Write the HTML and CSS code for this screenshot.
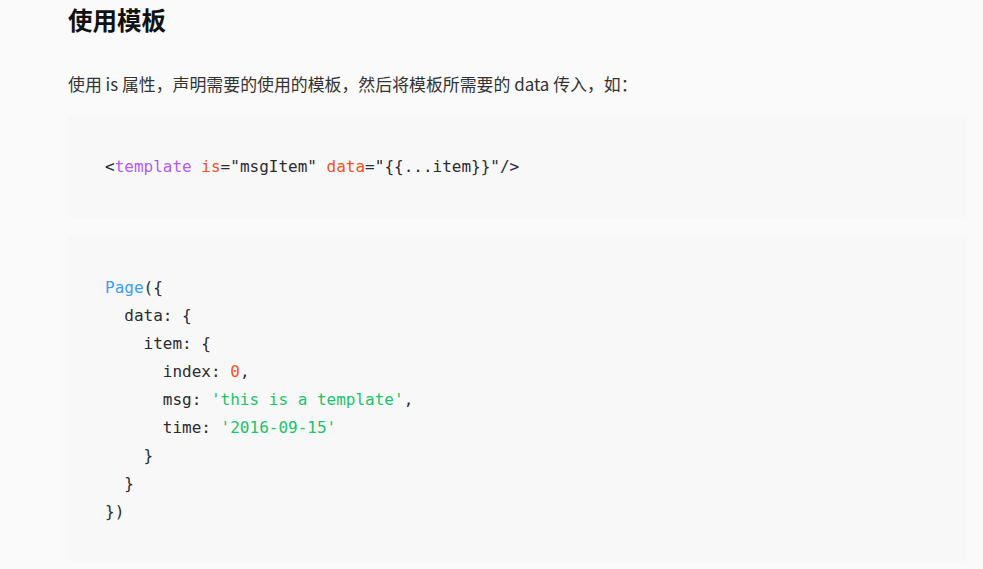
FILE: index.html
```
<!DOCTYPE html>
<html lang="zh-CN">
<head>
<meta charset="utf-8">
<title>使用模板</title>
<link rel="stylesheet" href="styles.css">
</head>
<body>
<main class="doc">
  <h2 class="title">使用模板</h2>
  <p class="text">使用 is 属性，声明需要的使用的模板，然后将模板所需要的 data 传入，如：</p>
  <pre class="code"><code>&lt;<span class="tag">template</span> <span class="attr">is</span>="msgItem" <span class="attr">data</span>="{{...item}}"/&gt;</code></pre>
  <pre class="code code-js"><code><span class="fn">Page</span>({
  data: {
    item: {
      index: <span class="num">0</span>,
      msg: <span class="str">'this is a template'</span>,
      time: <span class="str">'2016-09-15'</span>
    }
  }
})</code></pre>
</main>
</body>
</html>
```

FILE: styles.css
```
html, body {
  margin: 0;
  padding: 0;
  background: #fafafa;
}

.doc {
  padding: 0 16px 0 68px;
  font-family: "Noto Sans CJK SC", "Noto Sans", sans-serif;
  color: #333;
}

.title {
  margin: 2px 0 0;
  font-size: 24.5px;
  line-height: 36px;
  font-weight: 700;
  color: #111;
}

.text {
  margin: 32px 0 0;
  font-size: 16.9px;
  line-height: 28px;
  color: #333;
}

.code {
  margin: 17px 0 0;
  padding: 38px 37px 37px;
  background: #f8f8f8;
  font-family: "DejaVu Sans Mono", "Liberation Mono", monospace;
  font-size: 16px;
  line-height: 28px;
  color: #2b2b33;
  white-space: pre;
}

.code-js {
  padding-top: 39px;
  padding-bottom: 36px;
}

.code code {
  font-family: inherit;
}

.tag { color: #b45cf2; }
.attr { color: #f4511e; }
.fn { color: #3b9ef3; }
.num { color: #f4511e; }
.str { color: #1dc36a; }
```
